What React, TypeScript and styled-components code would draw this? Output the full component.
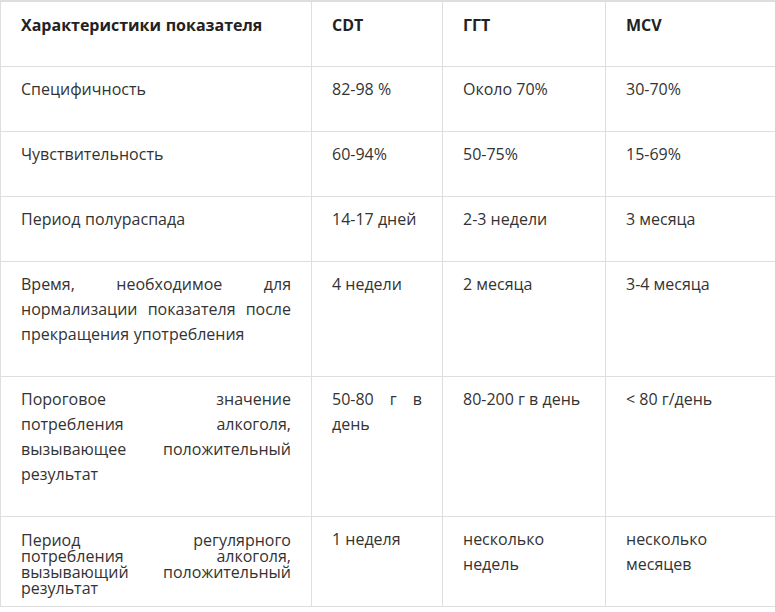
import React from 'react';
import styled, { createGlobalStyle } from 'styled-components';

const GlobalStyle = createGlobalStyle`
  html, body {
    margin: 0;
    padding: 0;
    background: #fff;
    overflow: hidden;
  }
  body {
    font-family: "Open Sans", "Liberation Sans", sans-serif;
    font-size: 16px;
    color: #333;
  }
`;

const Table = styled.table`
  width: 777px;
  border-collapse: separate;
  border-spacing: 0;
  table-layout: fixed;
  border-top: 2px solid #dedede;
`;

const Cell = styled.td<{ w: number; first?: boolean }>`
  box-sizing: border-box;
  width: ${p => p.w}px;
  border-right: 1px solid #dedede;
  border-bottom: 1px solid #dedede;
  border-left: ${p => (p.first ? '1px solid #dedede' : 'none')};
  padding: 10px 20px 8px;
  vertical-align: top;
  text-align: justify;
  line-height: 25px;
  word-spacing: ${p => (p.first ? '0.5px' : 'normal')};

  p {
    margin: 0 0 21px;
  }
`;

const HeadCell = styled(Cell).attrs({ as: 'th' })`
  padding-top: 11px;
  font-weight: 700;
  color: #222;
  text-align: left;

  p {
    margin-bottom: 20px;
  }
`;

// в последней строке первая ячейка свёрстана плотнее, без абзаца
const TightText = styled.div`
  margin-top: 5px;
  line-height: 16px;
  word-spacing: 5px;
  text-align: justify;
`;

const widths = [312, 131, 163, 171];

interface Row {
  label: string;
  values: string[];
}

const rows: Row[] = [
  { label: 'Специфичность', values: ['82-98 %', 'Около 70%', '30-70%'] },
  { label: 'Чувствительность', values: ['60-94%', '50-75%', '15-69%'] },
  { label: 'Период полураспада', values: ['14-17 дней', '2-3 недели', '3 месяца'] },
  {
    label: 'Время, необходимое для нормализации показателя после прекращения употребления',
    values: ['4 недели', '2 месяца', '3-4 месяца'],
  },
  {
    label: 'Пороговое значение потребления алкоголя, вызывающее положительный результат',
    values: ['50-80 г в день', '80-200 г в день', '< 80 г/день'],
  },
];

const headers = ['Характеристики показателя', 'CDT', 'ГГТ', 'MCV'];

export default function App() {
  return (
    <>
      <GlobalStyle />
      <Table>
        <thead>
          <tr>
            {headers.map((h, i) => (
              <HeadCell key={h} w={widths[i]} first={i === 0}>
                <p>{h}</p>
              </HeadCell>
            ))}
          </tr>
        </thead>
        <tbody>
          {rows.map((r, i) => (
            <tr key={i}>
              <Cell w={widths[0]} first><p>{r.label}</p></Cell>
              {r.values.map((v, j) => (
                <Cell key={j} w={widths[j + 1]}><p>{v}</p></Cell>
              ))}
            </tr>
          ))}
          <tr>
            <Cell w={widths[0]} first>
              <TightText>
                Период регулярного потребления алкоголя, вызывающий положительный результат
              </TightText>
            </Cell>
            <Cell w={widths[1]}><p>1 неделя</p></Cell>
            <Cell w={widths[2]}><p>несколько недель</p></Cell>
            <Cell w={widths[3]}><p>несколько месяцев</p></Cell>
          </tr>
        </tbody>
      </Table>
    </>
  );
}
